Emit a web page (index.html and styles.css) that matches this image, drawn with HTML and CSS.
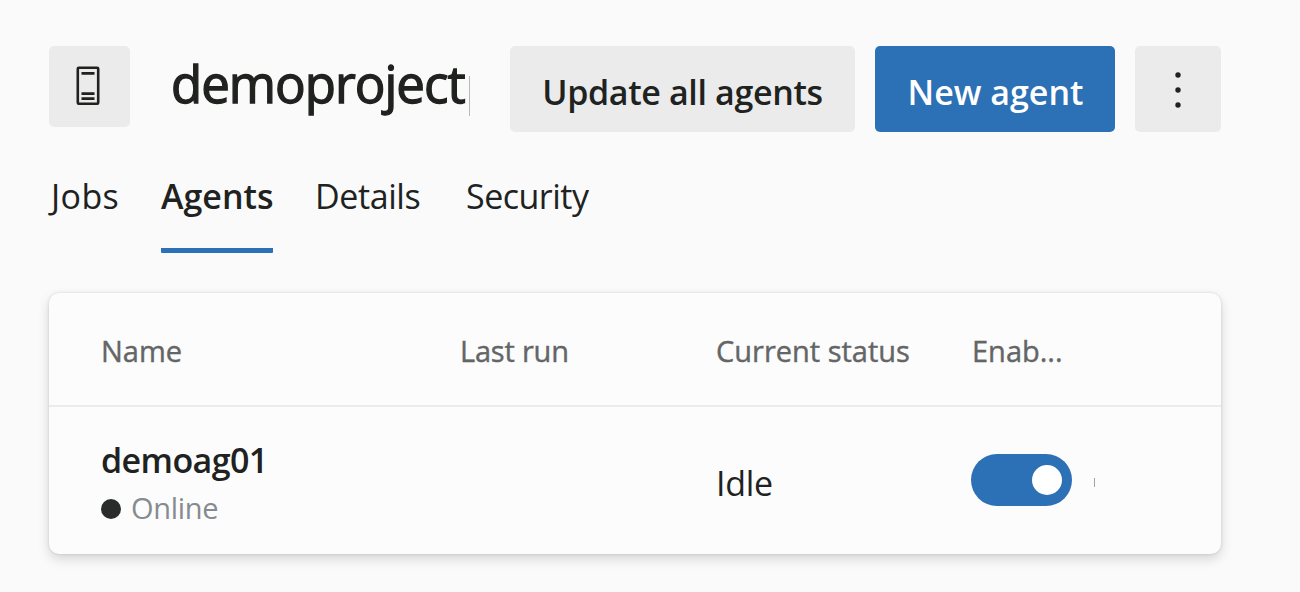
FILE: index.html
```html
<!DOCTYPE html>
<html lang="en">
<head>
<meta charset="utf-8">
<title>demoproject - Agents</title>
<link rel="stylesheet" href="styles.css">
</head>
<body>
<main class="page">
  <header class="header">
    <div class="pool-icon">
      <svg width="24" height="40" viewBox="0 0 24 40" fill="none" stroke="#20221f" stroke-width="2.6">
        <rect x="1.8" y="1.8" width="20.4" height="36" rx="1"/>
        <path d="M5.5 7.4h13M5.5 27.6h13M5.5 32.6h13"/>
      </svg>
    </div>
    <h1 class="title"><span class="title-text">demoproject</span></h1>
    <div class="actions">
      <button class="button button-update">Update all agents</button>
      <button class="button button-primary">New agent</button>
      <button class="button button-more" aria-label="More">
        <svg width="8" height="40" viewBox="0 0 8 40" fill="#20221f"><circle cx="4" cy="5" r="2.7"/><circle cx="4" cy="20" r="2.7"/><circle cx="4" cy="35" r="2.7"/></svg>
      </button>
    </div>
  </header>
  <nav class="tabs">
    <a class="tab tab-jobs">Jobs</a>
    <a class="tab tab-active">Agents</a>
    <a class="tab tab-details">Details</a>
    <a class="tab tab-security">Security</a>
  </nav>
  <section class="card">
    <div class="row row-head">
      <span class="th-name">Name</span><span class="th-run">Last run</span><span class="th-status">Current status</span><span class="th-enabled">Enab...</span>
    </div>
    <div class="row row-body">
      <div class="agent">
        <span class="agent-name">demoag01</span>
        <span class="agent-state"><i class="dot"></i><span class="online">Online</span></span>
      </div>
      <span></span>
      <span class="idle">Idle</span>
      <div class="toggle-cell"><span class="toggle"><i class="knob"></i></span><i class="clip"></i></div>
    </div>
  </section>
</main>
</body>
</html>
```
FILE: styles.css
```css
* { box-sizing: border-box; }
body {
  margin: 0;
  height: 592px;
  overflow: hidden;
  background: #fafafa;
  color: #20221f;
  font-family: "Open Sans", "Noto Sans", sans-serif;
}
.page { width: 1172px; margin-left: 49px; padding-top: 46px; }
.header { display: flex; height: 86px; }
.pool-icon {
  width: 81px; height: 81px;
  background: #ebebeb;
  border-radius: 5px;
  display: flex; align-items: center; justify-content: center;
  padding: 0 3px 1px 0;
}
.pool-icon svg { display: block; }
.title {
  margin: 7px 0 0 41px;
  width: 299px; height: 63px;
  font-size: 51px; font-weight: 400; line-height: 60px;
  letter-spacing: -1px;
  -webkit-text-stroke: 1.3px #20221f;
  white-space: nowrap;
  background: linear-gradient(#b8b8b8, #b8b8b8) no-repeat 298px 23px / 1px 40px;
}
.actions { margin-left: auto; display: flex; gap: 20px; }
.button {
  height: 86px; border: 0; border-radius: 5px;
  padding: 5px 0 0;
  background: #ebebeb; color: #20221f;
  font-family: inherit; font-size: 34px; font-weight: 600;
  white-space: nowrap;
}
.button-update { width: 345px; letter-spacing: -.35px; }
.button-primary { width: 240px; background: #2c70b5; color: #fff; padding-left: 1px; }
.button-more { width: 86px; padding: 2px 0 0; display: flex; align-items: center; justify-content: center; }
.tabs { display: flex; margin-top: 40px; height: 81px; font-size: 34px; line-height: 48px; }
.tab { height: 81px; white-space: nowrap; }
.tab-jobs { width: 112px; padding-left: 2px; letter-spacing: .4px; }
.tab-active { width: 112px; border-bottom: 5px solid #2c70b5; font-weight: 600; border-radius: 1px; }
.tab-details { margin-left: 42px; width: 150px; letter-spacing: -.4px; }
.tab-security { letter-spacing: -.5px; padding-left: 1px; }
.card {
  margin-top: 40px; height: 261px;
  background: #fcfcfc; border-radius: 10px;
  box-shadow: 0 0 3px rgba(0,0,0,.13), 0 5px 12px rgba(0,0,0,.15);
}
.row { display: grid; grid-template-columns: 359px 255px 256px 1fr; padding-left: 52px; }
.row > * { white-space: nowrap; }
.row-head {
  height: 114px; line-height: 111px; padding-top: 2px;
  border-bottom: 2px solid #ebebeb;
  color: #636566; font-size: 29px;
  -webkit-text-stroke: .4px #636566;
}
.th-run { letter-spacing: -.2px; }
.th-status, .th-enabled { padding-left: 1px; }
.row-body { height: 147px; }
.agent { display: flex; flex-direction: column; padding-top: 29px; }
.agent-name { font-size: 34px; line-height: 48px; font-weight: 600; letter-spacing: -.6px; }
.agent-state { display: flex; align-items: center; gap: 10px; height: 48px; color: #858b90; font-size: 29px; line-height: 48px; letter-spacing: -.3px; }
.dot { width: 20px; height: 20px; margin-top: 1px; border-radius: 50%; background: #2a2c2b; }
.idle { font-size: 34px; line-height: 48px; padding-top: 52px; padding-left: 1px; letter-spacing: -.3px; }
.toggle-cell { display: flex; gap: 22px; align-items: center; height: 52px; margin-top: 47px; }
.toggle { width: 101px; height: 52px; border-radius: 26px; background: #2c70b5; display: flex; align-items: center; justify-content: flex-end; padding-right: 10px; }
.knob { width: 30px; height: 30px; border-radius: 50%; background: #fff; }
.clip { width: 1px; height: 9px; margin-top: 4px; background: #9da5aa; }
```
